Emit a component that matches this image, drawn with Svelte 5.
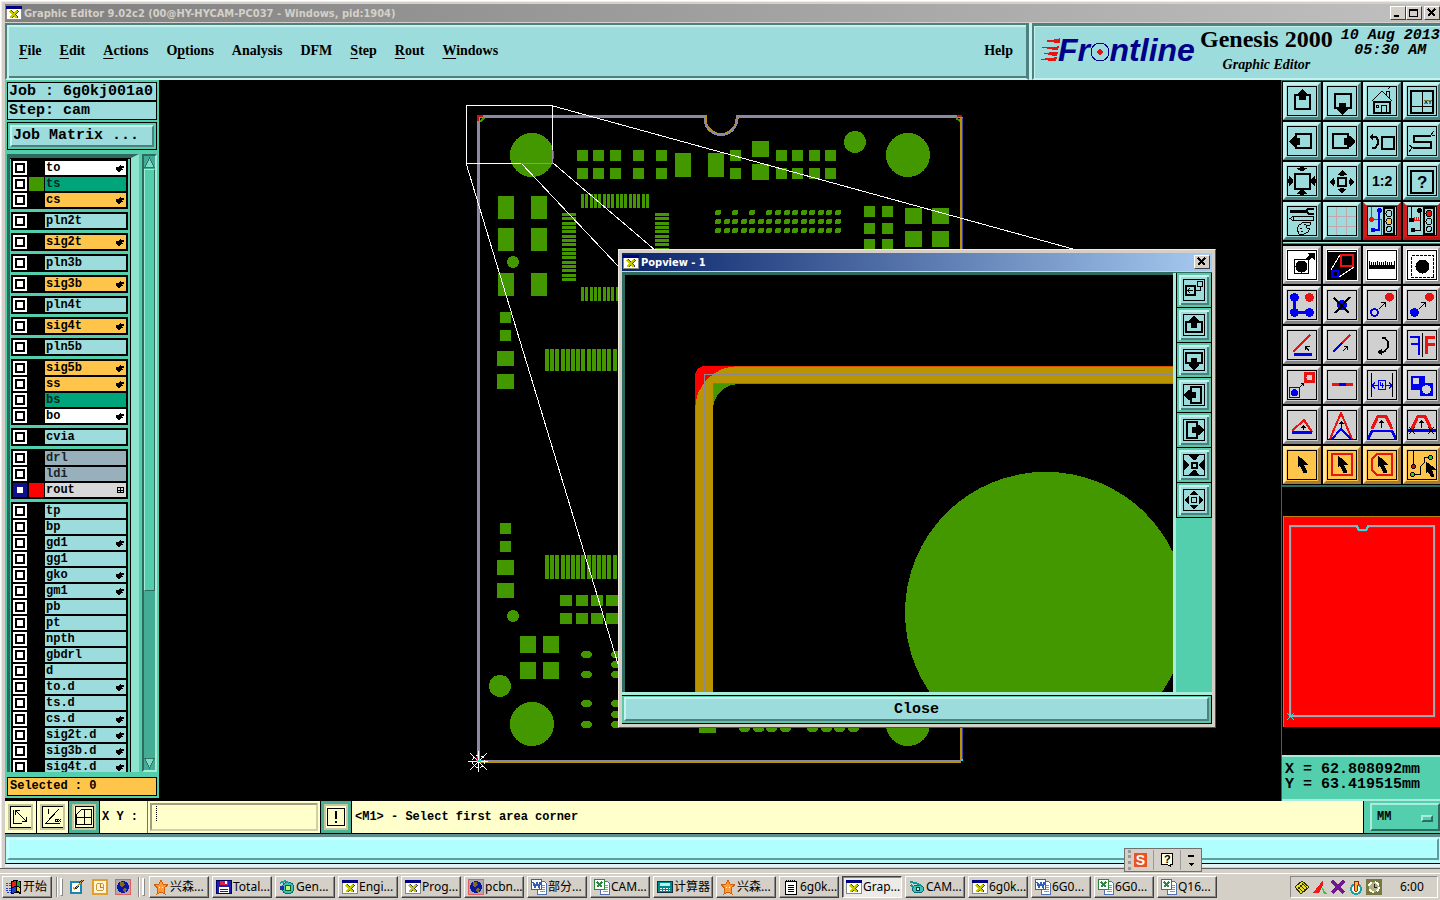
<script lang="ts">
  type Layer = { name: string; tone?: string; color?: string; hand?: boolean; mark?: boolean; on?: boolean };

  const menus = [
    ['F', 'ile', ''],
    ['E', 'dit', ''],
    ['A', 'ctions', ''],
    ['p', 'tions', 'O'],
    ['', 'Analysis', ''],
    ['', 'DFM', ''],
    ['S', 'tep', ''],
    ['R', 'out', ''],
    ['W', 'indows', ''],
  ];

  const layerGroups: Layer[][] = [
    [
      { name: 'to', tone: 'white', hand: true },
      { name: 'ts', tone: 'green', color: '#439800' },
      { name: 'cs', tone: 'orange', hand: true },
    ],
    [{ name: 'pln2t' }],
    [{ name: 'sig2t', tone: 'orange', hand: true }],
    [{ name: 'pln3b' }],
    [{ name: 'sig3b', tone: 'orange', hand: true }],
    [{ name: 'pln4t' }],
    [{ name: 'sig4t', tone: 'orange', hand: true }],
    [{ name: 'pln5b' }],
    [
      { name: 'sig5b', tone: 'orange', hand: true },
      { name: 'ss', tone: 'orange', hand: true },
      { name: 'bs', tone: 'green' },
      { name: 'bo', tone: 'white', hand: true },
    ],
    [{ name: 'cvia' }],
    [
      { name: 'drl', tone: 'slate' },
      { name: 'ldi', tone: 'slate' },
      { name: 'rout', tone: 'grey', color: '#ff0000', mark: true, on: true },
    ],
    [
      { name: 'tp' },
      { name: 'bp' },
      { name: 'gd1', hand: true },
      { name: 'gg1' },
      { name: 'gko', hand: true },
      { name: 'gm1', hand: true },
      { name: 'pb' },
      { name: 'pt' },
      { name: 'npth' },
      { name: 'gbdrl' },
      { name: 'd' },
      { name: 'to.d', hand: true },
      { name: 'ts.d' },
      { name: 'cs.d', hand: true },
      { name: 'sig2t.d', hand: true },
      { name: 'sig3b.d', hand: true },
      { name: 'sig4t.d', hand: true },
    ],
  ];

  const R = '#e81414';
  const B = '#0000f0';
  const traffic = (a: string, b: string) =>
    `<path stroke-width="2" d="M17 2h10v26h-10z"/><circle cx="22" cy="7.500" r="3" fill="${a}"/><circle cx="22" cy="15.500" r="3" fill="${b}"/><circle cx="22" cy="23" r="2.500"/>`;
  const cursor = '<path fill="#000" d="M11 6v11l2-2 4 8 3-1-4-8h4z"/>';

  // each icon is drawn on a 30 x 30 grid
  const tools: { kind: string; label: string; art: string }[] = [
    { kind: 'aqua', label: 'Pan up', art: '<path stroke-width="2" d="M8 9h15v14h-15z"/><path fill="#000" stroke="none" d="M10 9l5-6h1l5 6v1h-2v4h-7v-4h-2z"/>' },
    { kind: 'aqua', label: 'Pan down', art: '<path stroke-width="2" d="M8 8h16v14h-16z"/><path fill="#000" stroke="none" d="M12 17h7v4h2v2l-5 6h-1l-5-6v-2h2z"/>' },
    { kind: 'aqua', label: 'Home', art: '<path d="M4.500 15.500L15 5l10.500 10.500M19.500 9V5.500h3V13M21 3l2-2"/><path stroke-width="2" d="M7 16v11h16V16z"/><path d="M14.500 27v-8h5v8M9.500 19.500h2v2h-2z"/>' },
    { kind: 'aqua', label: 'Zoom XY', art: '<path stroke-width="2" d="M4 5h22v22H4z"/><path d="M15.500 5v22M4 20.500h22"/><text x="17" y="18" font-size="6" fill="#000" stroke="none">XY</text>' },
    { kind: 'aqua', label: 'Pan left', art: '<path stroke-width="2" d="M9 8h15v14H9z"/><path fill="#000" stroke="none" d="M2 15l5-5h2v2h4v7H9v2H7l-5-5z"/>' },
    { kind: 'aqua', label: 'Pan right', art: '<path stroke-width="2" d="M6 8h15v14H6z"/><path fill="#000" stroke="none" d="M28 15l-5-5h-2v2h-4v7h4v2h2l5-5z"/>' },
    { kind: 'aqua', label: 'Previous zoom', art: '<path stroke-width="2" d="M15 11h12v12H15z"/><path stroke-width="2" d="M5 11h4l2 3v4l-3 4H5"/><path fill="#000" stroke="none" d="M2 11l4-4v8z"/>' },
    { kind: 'aqua', label: 'Snake', art: '<path stroke-width="2" d="M24 10H7v6h17v6H6"/><path d="M24 9l3-4M25 9h3M5 22l-3 4M2 19l4 3"/>' },
    { kind: 'aqua', label: 'Zoom in', art: '<path stroke-width="2" d="M8 8h15v15H8z"/><path fill="#000" stroke="none" d="M13 0h4v2h4l-5 3h-2l-5-3h4zM13 30h4v-2h4l-5-4h-2l-5 4h4zM0 13v4h2v4l4-5v-2l-4-5v4zM30 13v4h-2v4l-4-5v-2l4-5v4z"/>' },
    { kind: 'aqua', label: 'Zoom out', art: '<path stroke-width="2" d="M11 12h8v8h-8z"/><path fill="#000" stroke="none" d="M10 9h3v1h4V9h3l-5-5zM10 23h3v-1h4v1h3l-5 4zM7 11v3h1v4H7v3l-4-5zM23 11v3h-1v4h1v3l4-5z"/>' },
    { kind: 'aqua', label: 'Zoom 1:2', art: '<text x="5" y="20" font-size="14" font-weight="bold" fill="#000" stroke="none">1:2</text>' },
    { kind: 'aqua', label: 'Query', art: '<path stroke-width="2" d="M4 5h22v22H4z"/><text x="10" y="22" font-size="17" fill="#000" stroke="none">?</text>' },
    { kind: 'aqua', label: 'Tools', art: '<path stroke-width="3" d="M3 5.500h17"/><path stroke-width="2" d="M27 3l-6 0-2 2 3 3h5"/><path d="M3 12.500l3-2h20v4H6zM6 10.500v4"/><path d="M10 23l2-4 5-3h6v3l-4 1 1 2h3l-2 4-4 2h-5zM13 22h2M14 25h2M17 18h2"/>' },
    { kind: 'aqua', label: 'Grid', art: '<path stroke="#c0a8ac" d="M9.500 0v30M19.500 0v30M0 10.500h30M0 20.500h30"/>' },
    { kind: 'aqua red', label: 'Net colors', art: `<path stroke="${R}" stroke-width="1" d="M4.500 0v13.500h10V30"/><circle cx="4.500" cy="13.500" r="2.500" fill="${R}" stroke="none"/><path stroke="${B}" stroke-width="1.500" d="M12 5v19H6"/><circle cx="12.500" cy="4.500" r="2.500" fill="${B}" stroke="none"/><circle cx="6" cy="24" r="2.500" fill="${B}" stroke="none"/>${traffic('none', '#ffc54a')}` },
    { kind: 'aqua red', label: 'Net stop', art: `<path d="M4.500 0v13M13 5v19H6"/><path stroke="${R}" d="M5 14.500h8M7.500 11v3M9.500 11v3M11.500 11v3"/><g fill="#000" stroke="none"><circle cx="4.500" cy="14" r="2.500"/><circle cx="12.500" cy="4.500" r="2.500"/><circle cx="6" cy="24" r="2.500"/></g>${traffic('#ff0000', 'none')}` },
    { kind: 'white', label: 'Select feature', art: '<path d="M7.500 9.500h14v14h-14z"/><circle cx="14.500" cy="16.500" r="6" fill="#000" stroke="none"/><path stroke-width="3" d="M20 10l4-4"/><path fill="#000" stroke="none" d="M20 3h8v8z"/>' },
    { kind: 'white', label: 'Popview', art: `<path fill="#000" stroke="none" d="M1 2h28v27H1z"/><path stroke="#fff" d="M13 5L4 20M27 17l-15 10"/><path stroke="${R}" stroke-width="2" d="M14 5h12v11H14z"/><path stroke="${B}" stroke-width="2" d="M5 21h6v6H5z"/>` },
    { kind: 'white', label: 'Measure', art: '<path fill="#000" stroke="none" d="M2 15h26v4H2z"/><path d="M2.500 11v5M4.500 12v4M6.500 12v4M8.500 12v4M10.500 11v5M12.500 12v4M14.500 12v4M16.500 12v4M18.500 11v5M20.500 12v4M22.500 12v4M24.500 12v4M27.500 11v5"/>' },
    { kind: 'white', label: 'Area select', art: '<path stroke-dasharray="3 1" d="M4.500 5.500h22v22h-22z"/><circle cx="15.500" cy="16.500" r="7" fill="#000" stroke="none"/>' },
    { kind: 'grey', label: 'Add line', art: `<path stroke="${B}" stroke-width="3" d="M7.500 7v15.500H23"/><g fill="${B}" stroke="none"><circle cx="7.500" cy="7.500" r="4.500"/><circle cx="7.500" cy="22.500" r="4.500"/><circle cx="22.500" cy="22.500" r="4.500"/></g><circle cx="22.500" cy="7.500" r="4.500" fill="${R}" stroke="none"/>` },
    { kind: 'grey', label: 'Delete', art: `<circle cx="15" cy="15" r="5" fill="${B}" stroke="none"/><path stroke-width="2" d="M7 8l15 15M23 7L8 23"/>` },
    { kind: 'grey', label: 'Move', art: `<circle cx="7.500" cy="22.500" r="3.500" stroke="${B}" stroke-width="2"/><circle cx="22.500" cy="7" r="4.500" fill="${R}" stroke="none"/><path d="M12 19l6-6M14 12.500h4.500V17"/>` },
    { kind: 'grey', label: 'Copy', art: `<circle cx="7.500" cy="22.500" r="4.500" fill="${B}" stroke="none"/><circle cx="22.500" cy="7" r="4.500" fill="${R}" stroke="none"/><path d="M12 19l6-6M14 12.500h4.500V17"/>` },
    { kind: 'grey', label: 'Rotate', art: `<path stroke="${R}" stroke-width="2.500" d="M6 22L23 5"/><path stroke="${B}" stroke-width="3" d="M7 24.500h18"/><path d="M22 21l-3-4M18.500 20v-4h4"/>` },
    { kind: 'grey', label: 'Stretch', art: `<path stroke="${B}" stroke-width="2.500" d="M6 22l9-9"/><path stroke="${R}" stroke-width="2.500" d="M15 13l8-8"/><path d="M16 21l4-4M17 16.500h3.500V20"/>` },
    { kind: 'grey', label: 'Turn', art: '<path stroke-width="1.500" d="M15 8h3l3 4v5l-3 4-2 1h-4"/><path fill="#000" stroke="none" d="M10 22l5-3v6z"/>' },
    { kind: 'grey', label: 'Mirror', art: `<path stroke="${B}" stroke-width="2" d="M3 7h9v18M4 14h8"/><path stroke="${R}" stroke-width="3" d="M28 7.500h-9V24M19 14.500h9"/><path d="M15.500 3v24"/>` },
    { kind: 'grey', label: 'Substitute', art: `<path fill="${R}" stroke="none" d="M17 2h11v11H17z"/><circle cx="22.500" cy="7.500" r="3" fill="#d4d4d4" stroke="none"/><path stroke="${B}" d="M2.500 17.500h10v10h-10z"/><circle cx="7.500" cy="22.500" r="3.500" fill="${B}" stroke="none"/><path d="M13 17l3-3M14 13.500h2.500V16"/>` },
    { kind: 'grey', label: 'Break', art: `<path stroke="${R}" stroke-width="3" d="M5 14.500h21"/><path stroke="${B}" stroke-width="3" d="M12 14.500h7"/>` },
    { kind: 'grey', label: 'Resize', art: `<path d="M4.500 3v24M25.500 3v24"/><path stroke="${B}" d="M5 15.500h6M8 12.500l-3 3 3 3M19 15.500h6M22 12.500l3 3-3 3M11.500 10.500h7v9h-7zM13.500 12v3h3M15.500 13v5"/>` },
    { kind: 'grey', label: 'Merge', art: `<path fill="${B}" stroke="none" d="M4 6h14v7h8v13H13v-6H4z"/><circle cx="9" cy="11" r="3.500" fill="#d4d4d4" stroke="none"/><circle cx="19.500" cy="19.500" r="4.500" fill="#d4d4d4" stroke="none"/>` },
    { kind: 'grey', label: 'Edge move', art: `<path stroke="${R}" stroke-width="2" d="M5 21L17 10l8 12"/><path stroke="${B}" stroke-width="3" d="M5 22.500h20"/><path d="M16.500 20v-4M14.500 18l2-2 2 2"/>` },
    { kind: 'grey', label: 'Corner move', art: `<path stroke="${R}" stroke-width="2" d="M3 29L14 3l11 26"/><path stroke="${B}" stroke-width="2" d="M5 29l9-10 10 10"/><path d="M14.500 19v-7M12.500 14l2-2 2 2"/>` },
    { kind: 'grey', label: 'Trapeze', art: `<path stroke="${R}" stroke-width="3" d="M5 19l6-13h8l6 13"/><path stroke="${B}" stroke-width="2.500" d="M1 29l4-8h20l4 8"/><path d="M14.500 18v-7M12.500 13l2-2 2 2"/>` },
    { kind: 'grey', label: 'Trapeze cut', art: `<path stroke="${R}" stroke-width="3" d="M5 19l6-13h7l6 13"/><path stroke="${B}" stroke-width="3" d="M0 20.500h30"/><path d="M14.500 18v-7M12.500 13l2-2 2 2M2 17l6 7M8 17l-6 7M21 17l6 7M27 17l-6 7"/>` },
    { kind: 'orange', label: 'Select', art: cursor },
    { kind: 'orange', label: 'Select rectangle', art: `<path stroke="${R}" stroke-width="2" d="M5 4h20v21H5z"/>${cursor}` },
    { kind: 'orange', label: 'Select polygon', art: `<path stroke="${R}" stroke-width="2" d="M10 4h15v21H10l-5-5V9z"/>${cursor}` },
    { kind: 'orange', label: 'Select net', art: '<path d="M6.500 0v16M6 24.500h7V17l4-4V7.500h6"/><circle cx="6.500" cy="16.500" r="2" fill="#c01414"/><circle cx="5.500" cy="24.500" r="2" fill="#20d020"/><circle cx="23.500" cy="7.500" r="2" fill="#20d020"/><path fill="#000" d="M19 12v11l2-2 4 6 2-1-3-7h4z"/>' },
  ];

  // popview icons use a 22 x 22 grid
  const popTools = [
    { label: 'Track', art: '<path stroke-width="2" d="M3 7h9v9H3z"/><path d="M14.500 2.500h5v5h-5zM5 11.500h5M7 9l-2 2.500L7 14M12 11.500h5V7"/>' },
    { label: 'Up', art: '<path stroke-width="2" d="M3 8h16v10H3z"/><path fill="#000" stroke="none" d="M6 7l4-5h2l4 5v1h-2v6H8V8H6z"/>' },
    { label: 'Down', art: '<path stroke-width="2" d="M3 4h16v10H3z"/><path fill="#000" stroke="none" d="M8 9h6v6h2v1l-4 5h-2l-4-5v-1h2z"/>' },
    { label: 'Left', art: '<path stroke-width="2" d="M8 3h10v16H8z"/><path fill="#000" stroke="none" d="M1 10l5-4h1v2h6v6H7v2H6l-5-4z"/>' },
    { label: 'Right', art: '<path stroke-width="2" d="M4 3h10v16H4z"/><path fill="#000" stroke="none" d="M21 10l-5-4h-1v2H9v6h6v2h1l5-4z"/>' },
    { label: 'Zoom in', art: '<path stroke-width="2" d="M9 9h5v5H9z"/><path fill="#000" stroke="none" d="M6 1h10l-3 5h-3zM6 21h10l-3-5h-3zM1 6v10l5-4v-2zM21 6v10l-5-4v-2z"/>' },
    { label: 'Zoom out', art: '<path d="M8.500 8.500h5v5h-5z"/><path fill="#000" stroke="none" d="M7 6h8l-3-4h-2zM7 16h8l-3 4h-2zM6 7v8l-4-3v-2zM16 7v8l4-3v-2z"/>' },
  ];

  // board pads as [x, y, width, height]
  const pads: number[][] = [];
  const grid = (xs: number[], ys: number[], w: number, h: number) => {
    for (const y of ys) for (const x of xs) pads.push([x, y, w, h]);
  };
  grid([577, 593, 610, 633, 656, 776, 792, 809, 825], [150, 168], 11, 11);
  grid([730], [150, 168], 11, 11);
  grid([675, 708], [153], 16, 24);
  grid([752], [141, 164], 17, 16);
  grid([498, 531], [196, 228, 273], 16, 23);
  grid([500], [312, 330, 523, 541], 11, 11);
  grid([497], [351, 374, 560, 583], 17, 15);
  grid([864, 882], [206, 223, 239], 11, 11);
  grid([905, 932], [208, 231], 17, 16);
  grid([560, 576, 591, 606], [595, 613], 12, 11);
  grid([520, 543], [636, 662], 16, 17);
  grid([699], [728], 17, 5);
  for (let i = 0; i < 16; i++) {
    const d = Math.round((i * 13) / 3);
    grid([581 + d], [194, 287], 3, 14);
    grid([562, 655], [213 + d], 14, 3);
  }
  for (let i = 0; i < 14; i++) {
    const d = Math.round(i * 5.2);
    grid([545 + d], [349], 4, 22);
    grid([545 + d], [555], 4, 24);
  }

  const holes = [
    [532, 155, 22],
    [855, 142, 11],
    [908, 155, 22],
    [513, 262, 6],
    [513, 616, 6],
    [500, 686, 11],
    [532, 724, 22],
    [908, 724, 22],
  ];

  const dots: number[][] = [];
  for (let i = 0; i < 15; i++) {
    const x = Math.round(718 + i * 8.57);
    if (![1, 3, 5].includes(i)) dots.push([x, 212]);
    dots.push([x, 221], [x, 230]);
  }

  const ovals = [651, 671, 700, 721].map((y) => [581, y]);
  for (const y of [651, 661, 671, 700, 711, 721]) ovals.push([611, y]);
  for (const x of [739, 753, 766, 780, 807, 821, 834, 848]) ovals.push([x, 725]);

  const tasks = [
    { icon: 'star', text: '兴森...' },
    { icon: 'disk', text: 'Total...' },
    { icon: 'gen', text: 'Gen...' },
    { icon: 'x', text: 'Engi...' },
    { icon: 'x', text: 'Prog...' },
    { icon: 'globe', text: 'pcbn...' },
    { icon: 'word', text: '部分...' },
    { icon: 'excel', text: 'CAM...' },
    { icon: 'calc', text: '计算器' },
    { icon: 'star', text: '兴森...' },
    { icon: 'note', text: '6g0k...' },
    { icon: 'x', text: 'Grap...', active: true },
    { icon: 'eye', text: 'CAM...' },
    { icon: 'x', text: '6g0k...' },
    { icon: 'word', text: '6G0...' },
    { icon: 'excel', text: '6G0...' },
    { icon: 'excel', text: 'Q16...' },
  ];

  // 16 x 16 system icons
  const doc = (c: string, mark: string) =>
    `<path fill="#fff" stroke="#5070b0" d="M6.500 2.500h7l2 2v11h-9z"/><path stroke="#8098c8" d="M9 6h5M9 8h5M9 10h5M9 12h5"/><path fill="#fff" stroke="${c}" d="M.5.5h10v10H.5z"/><path stroke="${c}" stroke-width="2" d="${mark}"/>`;
  const icons: Record<string, string> = {
    x: '<path fill="#fff" stroke="#888" d="M.5 1.500h15v13H.5z"/><path fill="#000080" d="M0 1h16v3H0z"/><path stroke="#444" stroke-width="2" d="M5 6l7 7M12 6l-7 7"/><path stroke="#c8c800" stroke-width="2" d="M4 6l7 7M11 6l-7 7"/>',
    star: '<path fill="#ff9c38" stroke="#d06010" d="M8 1l2 4 5 1-4 3 1 6-4-2-4 2 1-6-4-3 5-1z"/><path stroke="#fff" d="M6 8h1M9 8h1"/>',
    disk: '<path fill="#2020b0" stroke="#000060" d="M.5 1.500h15v13H.5z"/><path fill="#e02040" d="M4 2h8v4H4z"/><path fill="#fff" d="M3 8h10v6H3zM9 2h2v3H9z"/><path stroke="#2020b0" d="M4 10h8M4 12h8"/>',
    gen: '<circle cx="9" cy="9" r="6" fill="#40c0b8" stroke="#086870"/><circle cx="9" cy="9" r="3" fill="#c8f080" stroke="#106020"/><path stroke="#18a0a0" stroke-width="2" d="M1 4l5-2 4 2"/><path fill="#2030a0" d="M1 7h4v4H1z"/>',
    globe: '<path fill="#b0a8b0" stroke="#e06060" d="M.5.5h15v15H.5z"/><circle cx="8" cy="8" r="6" fill="#0818a0"/><path fill="#806828" d="M5 3h4l1 3-3 2-2-1zM9 9l3 1-2 4-2-2z"/>',
    word: doc('#3060b8', 'M2 3l2 5 2-4 2 4 1-5'),
    excel: doc('#308840', 'M3 3l5 5M8 3l-5 5'),
    calc: '<path fill="#008888" stroke="#103040" d="M.5 2.500h15v11H.5z"/><path fill="#b8f0f0" d="M3 4h10v3H3z"/><path stroke="#fff" stroke-dasharray="2 1" d="M3 9h10M3 11h10"/>',
    note: '<path fill="#fff" stroke="#000" d="M2.500 2.500h11v13h-11z"/><path stroke="#000" stroke-dasharray="1 1" d="M3 1h10"/><path stroke="#000" d="M5 6h6M5 8h6M5 10h6M5 12h6"/>',
    eye: '<ellipse cx="9" cy="10" rx="6" ry="4" fill="#40c0b8" stroke="#086870"/><circle cx="9" cy="10" r="2" fill="#c8f0e0" stroke="#044"/><path stroke="#0898a0" stroke-width="2" d="M1 3l6 1 6 3M2 6l3 3"/>',
    pen: '<path fill="#fff" stroke="#1888b0" stroke-width="2" d="M2 3h10v11H2z"/><path stroke="#202020" stroke-width="2" d="M6 10l8-9"/><path stroke="#d89820" d="M7 9l7-8M4 8l2 3"/>',
    clock: '<path fill="#fff4d8" stroke="#e0a030" stroke-width="2" d="M1 1h14v14H1z"/><circle cx="8" cy="8" r="4" stroke="#d09838"/><path stroke="#c08020" d="M8 5v3h3"/>',
    hist: '<path fill="#787840" d="M0 0h16v16H0z"/><circle cx="8" cy="8" r="5" fill="#b0b080" stroke="#fff" stroke-dasharray="5 3" stroke-width="2"/><path stroke="#222" d="M8 5v3h3"/>',
    pin: '<path fill="#e8e020" stroke="#303000" d="M1 8l7-6 7 6-8 7z"/><path stroke="#303000" d="M4 8l5 5M6 6l5 5M8 4l5 5M9 5l-5 5"/>',
    tri: '<path fill="#f01818" d="M1 14L11 1v5L7 14z"/><path fill="#20d830" d="M9 7l6 8h-3z"/>',
    cross: '<path stroke="#701890" stroke-width="3" d="M2 2l12 12M14 2L2 14"/>',
    lamp: '<circle cx="8" cy="10" r="5" fill="#e8fff8" stroke="#18a0a0" stroke-width="2"/><path fill="#f0c020" stroke="#a02010" d="M6 2h4v4l-1 6H7L6 6z"/>',
  };
  const quick = ['pen', 'clock', 'globe'];
  const tray = ['pin', 'tri', 'cross', 'lamp', 'hist'];

  let units = $state('MM');
  let coords = $state('');
</script>

{#snippet sys(name: string)}
  <svg class="sys" viewBox="0 0 16 16" fill="none" aria-hidden="true">{@html icons[name]}</svg>
{/snippet}

<div class="desktop">
  <div class="window">
    <div class="titlebar">
      {@render sys('x')}
      <span>Graphic Editor 9.02c2 (00@HY-HYCAM-PC037 - Windows, pid:1904)</span>
      <div class="winbtns">
        <button aria-label="Minimize"><svg viewBox="0 0 12 10"><path d="M2 8h5" stroke-width="2" /></svg></button>
        <button aria-label="Maximize"><svg viewBox="0 0 12 10"><path d="M1.500 1.500h8v7h-8zM1 2h9" /></svg></button>
        <button class="apart" aria-label="Close window"><svg viewBox="0 0 12 10"><path d="M2 1l7 7M9 1L2 8" stroke-width="2" /></svg></button>
      </div>
    </div>

    <header>
      <nav>
        {#each menus as [key, rest, before]}
          <button>{before}<u>{key}</u>{rest}</button>
        {/each}
        <button class="help">Help</button>
      </nav>
      <div class="brand">
        <svg class="logo" viewBox="0 -6 160 48">
          <g fill="#e81414">
            <path d="M5 9l14-2 3-1v5H19zM1 15h15l5-1-1 4h-4zM4 21l13-1h3l-1 4h-3zM0 27l13-1 6-1-1 4h-5z" />
          </g>
          <text x="20" y="29">Fr<tspan fill="none">o</tspan>ntline</text>
          <circle cx="62" cy="20" r="9" />
          <path fill="#e81414" d="M62 16l3 4-3 4-3-4z" />
        </svg>
        <div class="product">
          <div class="genesis">Genesis 2000</div>
          <div class="edition">Graphic Editor</div>
        </div>
        <div class="date">10 Aug 2013<br />05:30 AM</div>
      </div>
    </header>

    <main>
      <aside class="left">
        <div class="field">Job : 6g0kj001a0</div>
        <div class="field">Step: cam</div>
        <div class="matrix"><button>Job Matrix ...</button></div>
        <div class="browser">
          <div class="layers">
            {#each layerGroups as group}
              <div class="group">
                {#each group as layer}
                  <label class="layer">
                    <input type="checkbox" checked={layer.on} />
                    <span class="swatch" style:background={layer.color}></span>
                    <span class="name {layer.tone ?? ''}">
                      {layer.name}
                      {#if layer.hand}
                        <svg viewBox="0 0 8 8"><path d="M0 3h2l3-3v2h3v2H6v1h1L6 6H5L4 8H2L0 6z" /></svg>
                      {/if}
                      {#if layer.mark}
                        <svg viewBox="0 0 8 8"><path d="M1 1.500h6v5H1zM4 1v6M1 4h6" fill="none" stroke="#000" /></svg>
                      {/if}
                    </span>
                  </label>
                {/each}
              </div>
            {/each}
          </div>
          <div class="scroll">
            <button aria-label="Scroll up"><svg viewBox="0 0 12 13"><path d="M6 1l5 11H1z" /></svg></button>
            <div class="thumb"></div>
            <div class="rest"></div>
            <button aria-label="Scroll down"><svg viewBox="0 0 12 13"><path d="M1 1h10L6 12z" /></svg></button>
          </div>
        </div>
        <div class="selected">Selected : 0</div>
      </aside>

      <section class="canvas">
        <svg class="board" viewBox="159 80 1122 720" preserveAspectRatio="xMinYMin meet">
          <g fill="#439800">
            {#each pads as [x, y, w, h]}
              <rect {x} {y} width={w} height={h} />
            {/each}
            {#each holes as [x, y, r]}
              <circle cx={x} cy={y} {r} />
            {/each}
            {#each dots as [x, y]}
              <rect x={x - 3} y={y - 2} width="6" height="5" rx="2" />
            {/each}
            {#each ovals as [x, y]}
              <rect {x} {y} width="11" height="7" rx="4" />
            {/each}
          </g>
          <g fill="none">
            <path stroke="#b99400" stroke-width="3" d="M961 117v644" />
            <path stroke="#4040a0" d="M962.500 118v643" />
            <path stroke="#b99400" stroke-width="3" d="M961 116.500H737v2a16 16 0 0 1-32 0v-2H478.500V761.500H961" />
            <path stroke="#8c88a0" stroke-width="2" d="M961 117H737v2a16 16 0 0 1-32 0v-2H479V761H961" />
            <path stroke="#c01414" stroke-width="2" d="M478 121v-5h5M957 116h5M477 758v3" />
            <path stroke="#439800" stroke-width="2" d="M480 122l4-4M956 118l4 3" />
            <path stroke="#fff" d="M466.500 105.500h86v58h-86zM553 106l520 143M466 163l152 501M521 163l98 104M553 163l102 87" />
            <path stroke="#a088a8" d="M521 163.500h31.500V150" />
            <path stroke="#fff" d="M468 761.500h20M478.500 751v21M470 753l17 17M487 753l-17 17" />
            <circle cx="478.500" cy="761.500" r="6" stroke="#fff" stroke-dasharray="3 2" />
            <path stroke="#00e8e8" stroke-width="2" d="M477 761h4M961 760h2" />
          </g>
        </svg>

        <div class="popview">
          <div class="poptitle">
            {@render sys('x')}
            <span>Popview - 1</span>
            <button aria-label="Close popview"><svg viewBox="0 0 12 10"><path d="M2 1l7 7M9 1L2 8" stroke-width="2" /></svg></button>
          </div>
          <div class="popbody">
            <svg class="popcanvas" viewBox="625 275 547 417" preserveAspectRatio="xMinYMin slice">
              <defs>
                <clipPath id="routline">
                  <path d="M695 692V375a9 9 0 0 1 9-9h468v17H713v309z" />
                </clipPath>
              </defs>
              <circle cx="1045" cy="612" r="140.500" fill="#439800" />
              <path fill="none" stroke="#439800" stroke-width="18" d="M704 692V409a34 34 0 0 1 34-34h434" />
              <path fill="#f00" d="M695 692V375a9 9 0 0 1 9-9h468v17H713v309z" />
              <path clip-path="url(#routline)" fill="none" stroke="#b99400" stroke-width="18" d="M704 692V409a34 34 0 0 1 34-34h434" />
              <path fill="none" stroke="#8c8890" d="M704.500 692V374.500h467.500" />
            </svg>
            <div class="poptools">
              {#each popTools as tool}
                <button aria-label={tool.label}>
                  <svg viewBox="0 0 22 22" fill="none" stroke="#000"><rect x=".5" y=".5" width="21" height="21" />{@html tool.art}</svg>
                </button>
              {/each}
            </div>
          </div>
          <div class="popclose"><button>Close</button></div>
        </div>
      </section>

      <aside class="right">
        <div class="tools">
          {#each tools as tool, i}
            <button class="tool {tool.kind}" aria-label={tool.label}>
              <svg viewBox="0 0 30 30" fill="none" stroke="#000">
                {@html tool.art}
                <rect x=".5" y=".5" width="29" height="29" />
              </svg>
            </button>
            {#if i === 15}<div class="split"></div>{/if}
          {/each}
        </div>
        <div class="overview">
          <svg viewBox="0 0 157 211" preserveAspectRatio="none" fill="none">
            <rect width="157" height="211" fill="#f00" stroke="#c08010" />
            <path stroke="#306868" stroke-width="3" d="M7 10h67l2 4h7l2-4h66v190H7z" />
            <path stroke="#a8a8b0" stroke-width="2" d="M7 10h67l2 4h7l2-4h66v190H7z" />
            <path stroke="#38d8e0" stroke-width="2" d="M73 10l3 4h7l3-4" />
            <path stroke="#30e0e0" d="M4 197l7 7M11 197l-7 7" />
          </svg>
        </div>
        <div class="coords">
          <div>X = 62.808092mm</div>
          <div>Y = 63.419515mm</div>
        </div>
      </aside>
    </main>

    <div class="command">
      <button class="cmd" aria-label="Snap line">
        <svg viewBox="0 0 22 22" fill="none" stroke="#000"><path d="M.5.5h21v21H.5zM3.500 4v14M3 17.500h9M6 5l10 10M5.500 9V4.500H10M12 15.500h4.500V11" /></svg>
      </button>
      <button class="cmd" aria-label="Snap angle">
        <svg viewBox="0 0 22 22" fill="none" stroke="#000"><path d="M.5.5h21v21H.5zM3 17.500h15M4 17L17 3M6.500 3v5M13 13h2v2h-2zM16 13l3 3M19 13l-3 3" /></svg>
      </button>
      <button class="cmd sunk" aria-label="Snap grid">
        <svg viewBox="0 0 22 22" fill="none" stroke="#000"><path d="M3.500 8.500l5-5h10v15h-15zM11.500 4v14M4 11.500h14" /><path d="M2.500.5h18v21h-18z" /></svg>
      </button>
      <label class="xy" for="xy">X Y :</label>
      <div class="entry"><input id="xy" bind:value={coords} /></div>
      <button class="cmd sunk" aria-label="Alert">
        <svg viewBox="0 0 22 22" fill="none" stroke="#000"><path d="M2.500 2.500h17v17h-17z" /><path d="M11 5v8M11 15v2" stroke-width="2" /></svg>
      </button>
      <div class="message">&lt;M1&gt; - Select first area corner</div>
      <div class="units">
        <select bind:value={units} aria-label="Units">
          <option>MM</option>
          <option>INCH</option>
        </select>
      </div>
    </div>
    <div class="status"><div></div></div>
  </div>

  <footer>
    <button class="start">
      <svg class="sys" viewBox="0 0 16 16">
        <path fill="#000" d="M5 2l4-1 6 1v13l-5-1-5 1z" />
        <path fill="#e02020" d="M6 3l4-1v5l-4 1z" /><path fill="#20a030" d="M11 2l3 1v5l-3-1z" />
        <path fill="#2040d0" d="M6 9l4-1v5l-4 1z" /><path fill="#e8d020" d="M11 8l3 1v4l-3-1z" />
        <path stroke="#d02020" stroke-dasharray="2 1" d="M0 4h5M0 6h5" /><path stroke="#2040c0" stroke-dasharray="2 1" d="M0 9h5M0 11h5M1 13h4" />
      </svg>
      开始
    </button>
    <i></i><i class="grip"></i>
    <div class="quick">
      {#each quick as name}<button aria-label={name}>{@render sys(name)}</button>{/each}
    </div>
    <i></i><i class="grip"></i>
    <div class="tasks">
      {#each tasks as task}
        <button class:active={task.active}>{@render sys(task.icon)}<span>{task.text}</span></button>
      {/each}
    </div>
    <div class="tray">
      {#each tray as name}{@render sys(name)}{/each}
      <span>6:00</span>
    </div>
  </footer>

  <div class="ime">
    <i class="dots"></i>
    <b>S</b>
    <i></i>
    <svg viewBox="0 0 14 16"><path fill="#ffffe0" stroke="#000" d="M1.500 1.500h11v11h-2v2l-3-2h-6z" /><text x="4" y="11">?</text></svg>
    <i></i>
    <svg viewBox="0 0 8 16"><path d="M1 3h6v2H1zM1 11h6l-3 3z" /></svg>
  </div>
</div>

<style>
  :global(body) {
    margin: 0;
  }

  .desktop {
    --aqua: #9cdcdc;
    --teal: #54cfae;
    --lit: #c4f2ee;
    --shade: #4e8080;
    --deep: #2e6a60;
    --cream: #ffffcc;
    --face: #d4d0c8;
    --orange: #ffc54a;
    --mono: 'Liberation Mono', monospace;
    --ui: 'Noto Sans', 'Noto Sans CJK SC', sans-serif;
    position: relative;
    display: flex;
    flex-direction: column;
    height: 100vh;
    overflow: hidden;
    background: var(--face);
    color: #000;
    font: bold 12px var(--mono);
  }

  button,
  input,
  select {
    box-sizing: border-box;
    margin: 0;
    padding: 0;
    border: 0;
    border-radius: 0;
    background: none;
    color: inherit;
    font: inherit;
  }

  svg {
    display: block;
    shape-rendering: crispEdges;
  }

  .sys {
    flex: none;
    width: 16px;
    height: 16px;
  }

  .window {
    display: flex;
    flex: 1;
    flex-direction: column;
    min-height: 0;
    padding: 4px 0 0 5px;
    box-shadow: inset 1px 1px #fff, inset 2px 2px #f0ece4;
  }

  .titlebar,
  .poptitle {
    display: flex;
    align-items: center;
    gap: 2px;
    height: 18px;
    padding-left: 1px;
    font: bold 11px 'DejaVu Sans Condensed', 'DejaVu Sans', sans-serif;
  }

  .titlebar {
    flex: none;
    margin-bottom: 1px;
    background: linear-gradient(90deg, #808080, #c0c0c0);
    color: #d4d0c8;
  }

  .winbtns {
    display: flex;
    margin-left: auto;
  }

  .winbtns button,
  .poptitle button {
    width: 16px;
    height: 14px;
    padding: 1px;
    border: 1px solid;
    border-color: #fff #404040 #404040 #fff;
    background: var(--face);
  }

  .winbtns .apart {
    margin-left: 2px;
  }

  .winbtns svg,
  .poptitle button svg {
    width: 12px;
    height: 10px;
    fill: none;
    stroke: #000;
  }

  header {
    display: flex;
    flex: none;
    height: 57px;
    background: var(--lit);
  }

  nav,
  .brand {
    box-sizing: border-box;
    display: flex;
    align-items: center;
    border-top: 2px solid var(--shade);
    border-bottom: 2px solid var(--lit);
    border-left: 2px solid var(--shade);
    background: var(--aqua);
    box-shadow: inset 1px 1px var(--lit);
  }

  nav {
    flex: 1;
    gap: 18px;
    padding: 0 13px 2px 12px;
    border-right: 3px solid var(--shade);
    box-shadow: inset 2px 2px var(--lit), inset 0 -2px var(--shade);
    font: bold 14px 'Liberation Serif', serif;
  }

  .help {
    margin-left: auto;
  }

  nav u {
    text-underline-offset: 3px;
  }

  .brand {
    flex: none;
    align-items: flex-start;
    width: 408px;
    margin-left: 3px;
    border-top-width: 3px;
  }

  .logo {
    flex: none;
    width: 160px;
    height: 48px;
    margin: 0 2px 0 4px;
    overflow: visible;
  }

  .logo text {
    fill: #000088;
    font: italic bold 32px 'Liberation Sans', sans-serif;
  }

  .logo circle {
    fill: none;
    stroke: #000088;
    stroke-width: 1;
  }

  .product {
    text-align: center;
  }

  .genesis {
    font: bold 24px/26px 'Liberation Serif', serif;
    white-space: nowrap;
  }

  .edition {
    font: italic bold 14px/26px 'Liberation Serif', serif;
  }

  .date {
    margin: 2px 0 0 8px;
    font: italic bold 15px/15px var(--mono);
    text-align: center;
    white-space: nowrap;
  }

  main {
    display: flex;
    flex: 1;
    min-height: 0;
    background: #000;
  }

  .left {
    box-sizing: border-box;
    display: flex;
    flex: none;
    flex-direction: column;
    width: 154px;
    margin-bottom: 3px;
    padding: 2px;
    background: var(--teal);
  }

  .field {
    flex: none;
    height: 17px;
    padding-left: 1px;
    border: 1px solid #000;
    background: var(--aqua);
    font-size: 15px;
    line-height: 18px;
    white-space: nowrap;
  }

  .matrix {
    flex: none;
    margin: 2px 0 4px;
    padding: 2px;
    border: 1px solid #000;
  }

  .matrix button {
    width: 100%;
    height: 22px;
    padding-left: 1px;
    border: 2px solid;
    border-color: var(--lit) var(--shade) var(--shade) var(--lit);
    background: var(--aqua);
    font-size: 15px;
    line-height: 18px;
    text-align: left;
  }

  .browser {
    display: flex;
    flex: 1;
    gap: 3px;
    min-height: 0;
  }

  .layers {
    display: flex;
    flex: 1;
    flex-direction: column;
    gap: 3px;
    min-height: 0;
    overflow: hidden;
    padding: 1px 3px 0 1px;
    border: solid;
    border-width: 4px 8px 0 3px;
    border-color: var(--deep) #8ee4cc #8ee4cc var(--deep);
    box-shadow: inset 0 1px #000, inset -1px 0 #000;
  }

  .group {
    display: flex;
    flex: none;
    flex-direction: column;
    gap: 2px;
    padding: 2px;
    background: #000;
  }

  .layer {
    display: flex;
    height: 14px;
  }

  .layer input {
    flex: none;
    width: 14px;
    height: 14px;
    border: 2px solid #fff;
    background: #fff;
    box-shadow: inset 0 0 0 2px #000;
    appearance: none;
  }

  .layer input:checked {
    border-color: #101090;
    box-shadow: inset 0 0 0 2px #101090;
  }

  .swatch {
    flex: none;
    width: 15px;
    margin: 0 1px 0 2px;
  }

  .name {
    display: flex;
    flex: 1;
    align-items: center;
    justify-content: space-between;
    padding: 0 2px 0 1px;
    background: var(--aqua);
    line-height: 14px;
  }

  .name svg {
    width: 8px;
    height: 8px;
  }

  .name.white {
    background: #fff;
  }

  .name.green {
    background: #00a47a;
    color: #06281e;
  }

  .name.orange {
    background: var(--orange);
  }

  .name.slate {
    background: #98b0bc;
    color: #182428;
  }

  .name.grey {
    background: #d8d8d8;
  }

  .scroll {
    display: flex;
    flex: none;
    flex-direction: column;
    width: 11px;
    border: 2px solid;
    border-color: var(--deep) #a4ecd8 #a4ecd8 var(--deep);
    background: #44ac94;
  }

  .scroll button {
    height: 13px;
  }

  .scroll svg {
    width: 11px;
    height: 13px;
    fill: #7cdcc4;
    stroke: var(--deep);
  }

  .thumb {
    flex: 424;
    border: 1px solid;
    border-color: #a4ecd8 var(--deep) var(--deep) #a4ecd8;
    background: var(--teal);
  }

  .rest {
    flex: 168;
  }

  .selected {
    flex: none;
    height: 17px;
    margin-top: 5px;
    padding-left: 2px;
    border: 1px solid #000;
    background: var(--orange);
    line-height: 17px;
  }

  .canvas {
    position: relative;
    flex: 1;
    min-width: 0;
  }

  .board {
    width: 100%;
    height: 100%;
  }

  /* floating window on the board */
  .popview {
    position: absolute;
    top: 169px;
    left: 459px;
    box-sizing: border-box;
    display: flex;
    flex-direction: column;
    width: 598px;
    height: 479px;
    padding: 3px;
    border: 1px solid;
    border-color: #f0ece4 #505050 #505050 #f0ece4;
    background: var(--face);
  }

  .poptitle {
    flex: none;
    margin-bottom: 1px;
    background: linear-gradient(90deg, #0a246a, #a6caf0);
    color: #fff;
  }

  .poptitle button {
    margin: 0 2px 0 auto;
  }

  .popbody {
    display: flex;
    flex: 1;
    min-height: 0;
    border-top: 3px solid var(--deep);
    border-left: 3px solid var(--deep);
  }

  .popcanvas {
    flex: 1;
    min-width: 0;
    height: 100%;
    background: #000;
  }

  .poptools {
    display: flex;
    flex: none;
    flex-direction: column;
    gap: 1px;
    box-sizing: border-box;
    width: 39px;
    margin-top: -2px;
    padding: 0 1px;
    border-left: 3px solid #a8ecdc;
    background: linear-gradient(#000 245px, var(--teal) 245px);
  }

  .poptools button {
    display: flex;
    align-items: center;
    justify-content: center;
    height: 34px;
    border: 2px solid #5cc8a8;
    background: var(--aqua);
    box-shadow: inset 2px 2px var(--lit), inset -2px -2px var(--shade);
  }

  .poptools svg {
    width: 22px;
    height: 22px;
  }

  .popclose {
    margin-top: 3px;
    padding: 1px 2px 2px;
    border: solid #000;
    border-width: 1px 1px 1px 0;
    background: #5cc8a8;
    box-shadow: 0 -3px #a8ecdc;
  }

  .popclose button {
    width: 100%;
    height: 24px;
    padding-top: 1px;
    border: 2px solid;
    border-color: var(--lit) var(--shade) var(--shade) var(--lit);
    background: var(--aqua);
    font-size: 15px;
    line-height: 19px;
  }

  .right {
    display: flex;
    flex: none;
    flex-direction: column;
    box-sizing: border-box;
    width: 159px;
    overflow: hidden;
    border-left: 1px solid var(--deep);
    background: #000;
  }

  .tools {
    display: grid;
    grid-template-columns: repeat(4, 38px);
    gap: 2px;
    padding: 1px 0 0 1px;
    border-top: 1px solid var(--deep);
  }

  .split {
    grid-column: 1 / -1;
    width: 157px;
    height: 1px;
    border-top: 1px solid #a8ecdc;
    background: var(--shade);
  }

  .tool {
    width: 38px;
    height: 38px;
    padding: 1px;
    border: 3px solid;
    border-color: var(--lit) var(--shade) var(--shade) var(--lit);
    background: var(--aqua);
  }

  .tool svg {
    width: 30px;
    height: 30px;
    font-family: 'Liberation Sans', sans-serif;
  }

  .tool.red {
    border-color: var(--lit) #b01818 #b01818 #c82020;
    box-shadow: inset 0 0 0 2px #e01818;
  }

  .tool.grey {
    border-color: #ececec #848484 #848484 #ececec;
    background: #d0d0d0;
  }

  .tool.white {
    border-color: #d8d8d8 #909090 #909090 #d8d8d8;
    background: #fff;
  }

  .tool.orange {
    border-color: #ffe4a4 #a87c30 #a87c30 #ffe4a4;
    background: var(--orange);
  }

  .overview {
    display: flex;
    flex: 1;
    align-items: center;
    min-height: 0;
    margin-top: 1px;
    border-top: 2px solid var(--deep);
  }

  .overview svg {
    width: 157px;
    height: 211px;
    margin-left: 1px;
  }

  .coords {
    flex: none;
    padding: 5px 0 7px 3px;
    border-top: 2px solid #a8ecdc;
    border-bottom: 2px solid #a8ecdc;
    background: var(--teal);
    font-size: 15px;
    line-height: 15px;
  }

  .command {
    display: flex;
    flex: none;
    box-sizing: border-box;
    height: 33px;
    border-bottom: 1px solid #000;
    background: #000;
  }

  .cmd {
    display: flex;
    flex: none;
    align-items: center;
    justify-content: center;
    width: 31px;
    margin-right: 1px;
    border: 2px solid var(--cream);
    outline: 2px solid #c8c8a0;
    outline-offset: -5px;
    background: var(--cream);
  }

  .cmd.sunk {
    width: 30px;
    border: 3px solid #4cb094;
  }

  .cmd svg {
    flex: none;
    width: 22px;
    height: 22px;
  }

  .xy,
  .message {
    background: var(--cream);
    line-height: 32px;
    white-space: pre;
  }

  .xy {
    flex: none;
    width: 45px;
    padding-left: 2px;
    border-right: 1px solid var(--shade);
  }

  .entry {
    position: relative;
    flex: none;
    width: 172px;
    margin-right: 1px;
    background: var(--cream);
  }

  .entry input {
    width: 168px;
    height: 28px;
    margin: 2px;
    padding: 0 8px;
    border: 2px solid;
    border-color: #a0a080 #d0d0a8 #d0d0a8 #a0a080;
    outline: 0;
  }

  .entry::after {
    position: absolute;
    top: 5px;
    left: 8px;
    height: 15px;
    border-left: 1px dotted #000;
    content: '';
  }

  .message {
    flex: 1;
    min-width: 0;
    padding-left: 3px;
  }

  .units {
    position: relative;
    flex: none;
    width: 70px;
    margin-left: 1px;
    padding: 2px 0 2px 6px;
    background: var(--teal);
  }

  .units::after {
    position: absolute;
    top: 14px;
    right: 7px;
    width: 8px;
    height: 3px;
    border: 2px solid;
    border-color: #a8ecdc var(--deep) var(--deep) #a8ecdc;
    content: '';
  }

  .units select {
    width: 70px;
    height: 28px;
    padding-left: 5px;
    border: 2px solid;
    border-color: #a8ecdc var(--deep) var(--deep) #a8ecdc;
    appearance: none;
  }

  .status {
    flex: none;
    height: 25px;
    margin-bottom: 4px;
    padding: 1px 1px 0;
    border: solid;
    border-width: 3px 0 1px 1px;
    border-color: #608c8c #000 #000 #608c8c;
    background: #b8fcfc;
    box-shadow: 0 3px #e4f4f4;
  }

  .status div {
    box-sizing: border-box;
    height: 22px;
    border: 2px solid;
    border-color: #ccffff #609c9c #609c9c #ccffff;
    background: #b0fefe;
  }

  footer {
    display: flex;
    flex: none;
    align-items: center;
    box-sizing: border-box;
    height: 32px;
    padding: 5px 2px 1px;
    border-top: 1px solid #606060;
    box-shadow: inset 0 4px var(--face), inset 0 5px #fff;
    font: 12px/18px var(--ui);
  }

  footer i {
    flex: none;
    width: 1px;
    height: 20px;
    margin-left: 4px;
    border-left: 1px solid #888;
    background: #fff;
  }

  footer .grip {
    width: 1px;
    height: 16px;
    margin-left: 2px;
    border: 1px solid;
    border-color: #fff #888 #888 #fff;
  }

  .start,
  .tasks button {
    display: flex;
    align-items: center;
    height: 22px;
    border: 1px solid;
    border-color: #fff #404040 #404040 #fff;
    box-shadow: inset -1px -1px #888;
    white-space: nowrap;
  }

  .start {
    flex: none;
    gap: 1px;
    width: 50px;
    padding-left: 3px;
  }

  .quick {
    display: flex;
    flex: none;
    gap: 7px;
    margin: 0 3px 0 6px;
  }

  .tasks {
    display: flex;
    flex: 1;
    gap: 3px;
    min-width: 0;
    margin: 0 8px 0 4px;
  }

  .tasks button {
    flex: 0 1 60px;
    gap: 1px;
    min-width: 0;
    padding-left: 3px;
    overflow: hidden;
  }

  .tasks .active {
    border-color: #404040 #fff #fff #404040;
    background: #ecebe7;
    box-shadow: inset 1px 1px #888;
  }

  .tray {
    display: flex;
    flex: none;
    align-items: center;
    gap: 2px;
    box-sizing: border-box;
    width: 148px;
    height: 22px;
    padding-left: 3px;
    border: 1px solid;
    border-color: #888 #fff #fff #888;
  }

  .tray span {
    margin-left: 16px;
  }

  /* language bar, above the status strip */
  .ime {
    position: absolute;
    right: 238px;
    bottom: 28px;
    display: flex;
    align-items: center;
    gap: 6px;
    box-sizing: border-box;
    width: 78px;
    height: 24px;
    padding-left: 3px;
    border: 1px solid #707070;
    background: var(--face);
  }

  .ime i {
    width: 1px;
    height: 20px;
    background: #999;
  }

  .ime .dots {
    width: 0;
    border-left: 3px dotted #999;
    background: none;
  }

  .ime b {
    flex: none;
    width: 13px;
    margin-left: -3px;
    background: #e85424;
    color: #fff;
    font: bold 14px/14px 'Liberation Sans', sans-serif;
    text-align: center;
  }

  .ime svg {
    flex: none;
    width: 14px;
    height: 16px;
    font: bold 11px 'Liberation Sans', sans-serif;
  }

  .ime svg:last-child {
    width: 8px;
  }
</style>
